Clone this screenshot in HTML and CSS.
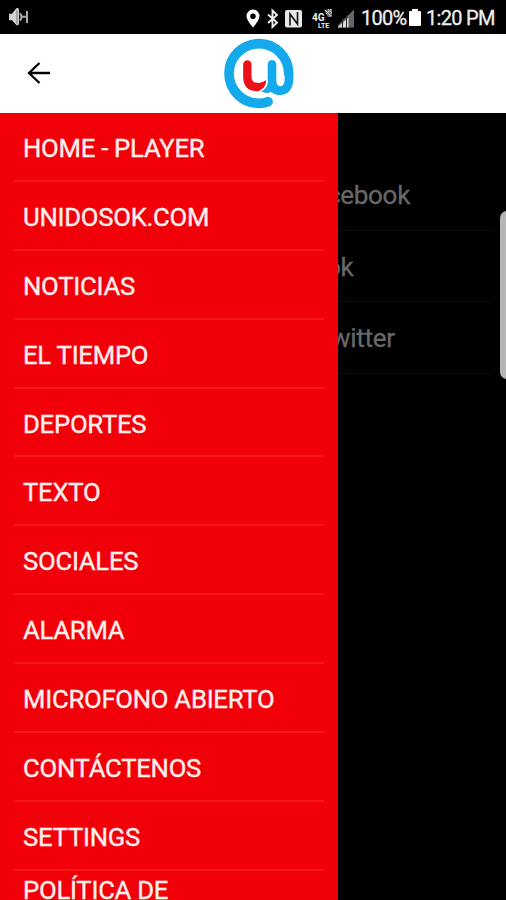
FILE: index.html
```html
<!DOCTYPE html>
<html lang="es">
<head>
<meta charset="utf-8">
<title>Unidos</title>
<link rel="stylesheet" href="styles.css">
</head>
<body>
<div class="status">
  <svg class="sound" viewBox="0 0 66 66"><path d="M3 23h9L25 7q5-3 8 3v44q-3 6-8 3L12 43H3z" fill="#d0d0d0"/><path d="M27 13v40" stroke="#777" stroke-width="3"/><path d="M36 22q9 11 0 22M42 32h12M57 15v36" fill="none" stroke="#aaa" stroke-width="6"/></svg>
  <svg class="signals" viewBox="0 0 120 30">
    <path fill="#fff" fill-rule="evenodd" d="M17 6.500a6.500 6.500 0 0 0-6.500 6.500c0 4.500 6.500 11.500 6.500 11.500s6.500-7 6.500-11.500a6.500 6.500 0 0 0-6.500-6.500zm0 4a2.800 2.800 0 1 1 0 5.600 2.800 2.800 0 0 1 0-5.600z"/>
    <path d="M32 11.500l9 8-4.500 4.500V7.500l4.500 4.500-9 8" fill="none" stroke="#eee" stroke-width="1.900"/>
    <rect x="49" y="7" width="17" height="17.500" rx="2" fill="#e8e8e8"/><path d="M54 22.500V11l7.500 10V9" fill="none" stroke="#111" stroke-width="1.600"/>
    <path d="M102 24.500V22l16-15.500v18z" fill="#666"/><path d="M101.500 24.500l11-10v10z" fill="#ddd"/><path d="M106.500 15v10M110.500 12v13" stroke="#222" stroke-width="1"/>
    <path d="M88 7l8-1v8h-4z" fill="#777"/><path d="M89 7l6 6M92 6l4 4M90 11l5-5" stroke="#ccc" stroke-width="1"/>
    <text class="net" x="76" y="18">4G</text><text class="lte" x="82" y="25">LTE</text>
  </svg>
  <span class="percent">100%</span>
  <svg class="battery" viewBox="0 0 12 20"><path d="M1 3h2V1h6v2h2q1 0 1 1v13q0 1-1 1H1q-1 0-1-1V4q0-1 1-1z" fill="#fff"/></svg>
  <span class="clock">1:20 PM</span>
</div>
<header class="bar">
  <svg class="back" viewBox="0 0 24 24"><path d="M23 12H2M12.500 2L2 12l10.500 10" fill="none" stroke="#000" stroke-width="2.300"/></svg>
  <svg class="logo" viewBox="0 6 270 237">
    <g fill="none" stroke-linecap="round" stroke-linejoin="round">
      <path d="M159 209Q146 214 131 214A89.500 89.500 0 1 1 221 125" stroke="#14a9ea" stroke-width="29"/>
      <path d="M222 125Q225 176 197 176Q172 176 171 147V97" stroke="#14a9ea" stroke-width="26"/>
      <path d="M97 97V136Q98 165 127 165" stroke="#ec1019" stroke-width="25"/>
    </g>
    <path d="M117 153Q139 155 154 144Q153 173 125 177z" fill="#ec1019"/>
    <path d="M160 141Q158 170 138 178Q160 190 180 174z" fill="#14a9ea"/>
    <path d="M157 141Q157 170 134 178" fill="none" stroke="#fff" stroke-width="4"/>
  </svg>
</header>
<main class="content">
  <nav class="menu">
    <a class="item">HOME - PLAYER</a>
    <a class="item">UNIDOSOK.COM</a>
    <a class="item">NOTICIAS</a>
    <a class="item">EL TIEMPO</a>
    <a class="item">DEPORTES</a>
    <a class="item">TEXTO</a>
    <a class="item">SOCIALES</a>
    <a class="item">ALARMA</a>
    <a class="item">MICROFONO ABIERTO</a>
    <a class="item">CONTÁCTENOS</a>
    <a class="item">SETTINGS</a>
    <a class="item last">POLÍTICA DE</a>
  </nav>
  <section class="social">
    <div class="link"><span>cebook</span></div>
    <div class="link"><span class="ok">ok</span></div>
    <div class="link"><span class="tw">witter</span></div>
  </section>
  <div class="edge"></div>
</main>
</body>
</html>
```
FILE: styles.css
```css
* { box-sizing: border-box; }
body {
  margin: 0;
  height: 900px;
  display: flex;
  flex-direction: column;
  overflow: hidden;
  background: #000;
  font-family: Roboto, "Liberation Sans", sans-serif;
}
.status {
  flex: none;
  height: 34px;
  display: flex;
  align-items: center;
  background: #000;
  color: #eee;
  font-size: 20px;
  line-height: 34px;
  white-space: nowrap;
}
.sound { width: 22px; height: 22px; margin-left: 8px; }
.signals { width: 120px; height: 30px; margin: 2px 0 0 206px; }
.net { fill: #eee; font-size: 10px; font-weight: 700; }
.lte { fill: #eee; font-size: 7px; font-weight: 700; }
.percent { width: 44px; margin: 2px 0 0 5px; letter-spacing: -0.7px; -webkit-text-stroke: 0.3px; }
.battery { width: 12px; height: 20px; margin: 2px 5px 0 4px; }
.clock { margin-top: 2px; letter-spacing: -0.7px; -webkit-text-stroke: 0.3px; }
.bar {
  flex: none;
  height: 79px;
  display: flex;
  align-items: center;
  background: #fff;
}
.back { width: 24px; height: 24px; margin: -1px 0 0 27px; }
.logo { width: 90px; height: 79px; margin-left: 164px; }
.content {
  position: relative;
  flex: 1;
  min-height: 0;
  display: flex;
  overflow: hidden;
}
.menu {
  flex: none;
  width: 338px;
  padding: 0 14px;
  background: #f20009;
  overflow: hidden;
}
.item {
  display: block;
  height: 68.9px;
  padding-left: 9px;
  border-bottom: 2px solid #f5151d;
  color: #fff0ee;
  font-size: 25.7px;
  line-height: 70px;
  letter-spacing: -0.25px;
  -webkit-text-stroke: 0.35px;
  white-space: nowrap;
}
.last { line-height: 39px; border: 0; }
.social { flex: 1; padding-top: 46px; overflow: hidden; }
.link {
  height: 71.7px;
  border-bottom: 1px solid #0d0d0d;
  margin-right: 14px;
  color: #686868;
  font-size: 26px;
  line-height: 72px;
  letter-spacing: -0.3px;
  -webkit-text-stroke: 0.3px;
}
.link span { margin-left: -11px; }
.link .ok { margin-left: -12px; }
.link .tw { margin-left: -7px; }
.edge {
  position: absolute;
  top: 98px;
  right: -8px;
  width: 14px;
  height: 168px;
  border-radius: 8px;
  background: #b5b5b5;
}
```
